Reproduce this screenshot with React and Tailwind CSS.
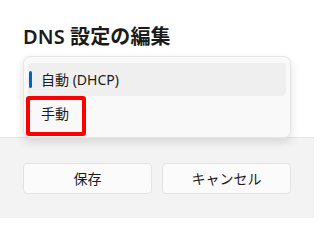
import React from "react";

const font = {
  fontFamily: '"Segoe UI", "Noto Sans", "Noto Sans CJK JP", sans-serif',
};

const App = () => {
  return (
    <div
      className="w-[314px] h-[218px] flex flex-col bg-white overflow-hidden text-[#1b1b1b]"
      style={font}
    >
      <div className="relative h-[137px] px-[23px] pt-[24px]">
        <h1 className="text-[20px] leading-[26px] font-semibold tracking-[0.1px]">
          DNS 設定の編集
        </h1>
        {/* open dropdown menu */}
        <div className="absolute left-[23px] top-[56px] w-[268px] h-[82px] z-10 rounded-[7px] border border-[#e6e6e6] bg-[#f9f9f9] shadow-[0_4px_10px_rgba(0,0,0,0.12)] px-[4px] pt-[6px] flex flex-col">
          <div className="relative h-[33px] flex items-center rounded-[4px] bg-[#efefef] pl-[13px] text-[14px]">
            <span className="absolute left-[1px] top-[8px] w-[3px] h-[17px] rounded-full bg-[#0067c0]" />
            自動 (DHCP)
          </div>
          <div className="relative h-[34px] flex items-center pl-[13px] text-[14px]">
            手動
            <span className="absolute left-[-2px] top-[0px] w-[60px] h-[40px] rounded-[3px] border-[4px] border-[#ff0000]" />
          </div>
        </div>
      </div>
      <div className="flex-1 bg-[#f3f3f3] border-t border-[#e5e5e5] px-[23px] pt-[25px] flex gap-[10px]">
        <button className="w-[129px] h-[31px] rounded-[4px] bg-[#fbfbfb] border border-[#e3e3e3] text-[14px]">
          保存
        </button>
        <button className="w-[129px] h-[31px] rounded-[4px] bg-[#fbfbfb] border border-[#e3e3e3] text-[14px]">
          キャンセル
        </button>
      </div>
    </div>
  );
};

export default App;
